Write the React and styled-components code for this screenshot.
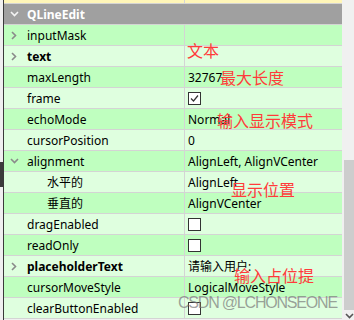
import styled, { createGlobalStyle } from "styled-components";

const GlobalStyle = createGlobalStyle`
  html, body {
    margin: 0;
    padding: 0;
    background: #f0f0f0;
  }
  body {
    font-family: "Noto Sans", "Noto Sans CJK SC", sans-serif;
    font-size: 12px;
    color: #000;
  }
`;

const Frame = styled.div`
  position: relative;
  display: flex;
  width: 354px;
  height: 320px;
  overflow: hidden;
  background: #f0f0f0;
`;

const Gutter = styled.div`
  width: 3px;
  display: flex;
  flex-direction: column;
`;

const GutterMark = styled.div`
  margin-top: 162px;
  height: 25px;
  background: #3c3c3c;
`;

const Edge = styled.div`
  width: 1px;
  background: #3a3a3a;
`;

const Tree = styled.div`
  width: 338px;
  display: flex;
  flex-direction: column;
`;

const Row = styled.div`
  display: grid;
  grid-template-columns: 181px 1fr;
  height: ${(p) => p.h || 20}px;
  flex-shrink: 0;
  border-bottom: 1px solid #d4d4d4;
  background: ${(p) => p.bg};
`;

const NameCell = styled.div`
  display: flex;
  align-items: center;
  padding-left: ${(p) => 5 + p.depth * 20}px;
  border-right: 1px solid #d4d4d4;
  font-weight: ${(p) => (p.bold ? 700 : 400)};
  white-space: nowrap;
  overflow: hidden;
`;

const ArrowSlot = styled.span`
  width: 18px;
  height: 20px;
  display: flex;
  align-items: center;
  flex-shrink: 0;
`;

const ValueCell = styled.div`
  position: relative;
  display: flex;
  align-items: center;
  padding-left: 3px;
  white-space: nowrap;
`;

const Header = styled.div`
  display: flex;
  align-items: center;
  height: 20px;
  flex-shrink: 0;
  padding-left: 5px;
  background: #a0a0a0;
  border-bottom: 1px solid #d4d4d4;
  color: #fff;
  font-weight: 700;
`;

const Check = styled.span`
  width: 11px;
  height: 11px;
  border: 1px solid #333;
  background: #fff;
  display: flex;
  align-items: center;
  justify-content: center;
`;

const Note = styled.span`
  position: absolute;
  z-index: 2;
  left: ${(p) => p.x}px;
  top: ${(p) => p.y}px;
  font-family: "Noto Sans CJK SC", sans-serif;
  font-size: 16px;
  line-height: 16px;
  color: #ff3b3b;
  white-space: nowrap;
`;

const Watermark = styled.div`
  position: absolute;
  z-index: 3;
  left: 178px;
  top: 295px;
  font-family: "Liberation Sans", sans-serif;
  font-size: 16px;
  line-height: 16px;
  letter-spacing: -1.2px;
  color: rgba(120, 120, 120, 0.7);
  white-space: nowrap;
`;

const Scroll = styled.div`
  flex: 1;
  display: flex;
  flex-direction: column;
  align-items: flex-end;
  background: #f0f0f0;
`;

const Thumb = styled.div`
  margin-top: 160px;
  width: 10px;
  height: 150px;
  background: #cdcdcd;
`;

const ScrollArrow = styled.div`
  margin-top: 3px;
  width: 10px;
  display: flex;
  justify-content: center;
`;

const Chevron = ({ open, color = "#8a8a8a" }) =>
  open ? (
    <svg width="9" height="6" viewBox="0 0 9 6" style={{ marginLeft: 1 }}>
      <polyline points="1,1 4.5,4.5 8,1" fill="none" stroke={color} strokeWidth="1.6" />
    </svg>
  ) : (
    <svg width="6" height="9" viewBox="0 0 6 9" style={{ marginLeft: 2 }}>
      <polyline points="1,1 4.5,4.5 1,8" fill="none" stroke={color} strokeWidth="1.6" />
    </svg>
  );

const Tick = () => (
  <svg width="9" height="9" viewBox="0 0 9 9">
    <polyline points="1,4.5 3.5,7 8,1.5" fill="none" stroke="#333" strokeWidth="1.2" />
  </svg>
);

const GREEN = "#bfffbf";
const LIGHT = "#dfffdf";

const rows = [
  { name: "inputMask", arrow: "right" },
  { name: "text", bold: true, arrow: "right", note: { t: "文本", x: 2, y: -4 } },
  { name: "maxLength", value: "32767", note: { t: "最大长度", x: 35, y: 2 } },
  { name: "frame", check: true, checked: true },
  { name: "echoMode", value: "Normal", note: { t: "输入显示模式", x: 32, y: 3 } },
  { name: "cursorPosition", value: "0" },
  { name: "alignment", arrow: "down", value: "AlignLeft, AlignVCenter" },
  { name: "水平的", depth: 1, value: "AlignLeft", note: { t: "显示位置", x: 46, y: 9 } },
  { name: "垂直的", depth: 1, value: "AlignVCenter" },
  { name: "dragEnabled", check: true },
  { name: "readOnly", check: true },
  { name: "placeholderText", bold: true, arrow: "right", value: "请输入用户:", note: { t: "输入占位提", x: 49, y: 11 } },
  { name: "cursorMoveStyle", value: "LogicalMoveStyle" },
  { name: "clearButtonEnabled", check: true },
];

const App = () => (
  <Frame>
    <GlobalStyle />
    <Gutter>
      <GutterMark />
    </Gutter>
    <Edge />
    <Tree>
      <Row h={3} bg="#fff6b8">
        <NameCell depth={0} />
        <ValueCell />
      </Row>
      <Header>
        <ArrowSlot>
          <Chevron open color="#f4f4f4" />
        </ArrowSlot>
        QLineEdit
      </Header>
      {rows.map((r, i) => (
        <Row key={r.name} bg={i % 2 === 0 ? GREEN : LIGHT}>
          <NameCell depth={r.depth || 0} bold={r.bold}>
            <ArrowSlot>{r.arrow && <Chevron open={r.arrow === "down"} />}</ArrowSlot>
            {r.name}
          </NameCell>
          <ValueCell>
            {r.check ? <Check>{r.checked && <Tick />}</Check> : r.value}
            {r.note && (
              <Note x={r.note.x} y={r.note.y}>
                {r.note.t}
              </Note>
            )}
          </ValueCell>
        </Row>
      ))}
    </Tree>
    <Scroll>
      <Thumb />
      <ScrollArrow>
        <Chevron open color="#555" />
      </ScrollArrow>
    </Scroll>
    <Watermark>CSDN @LCHONSEONE</Watermark>
  </Frame>
);

export default App;
